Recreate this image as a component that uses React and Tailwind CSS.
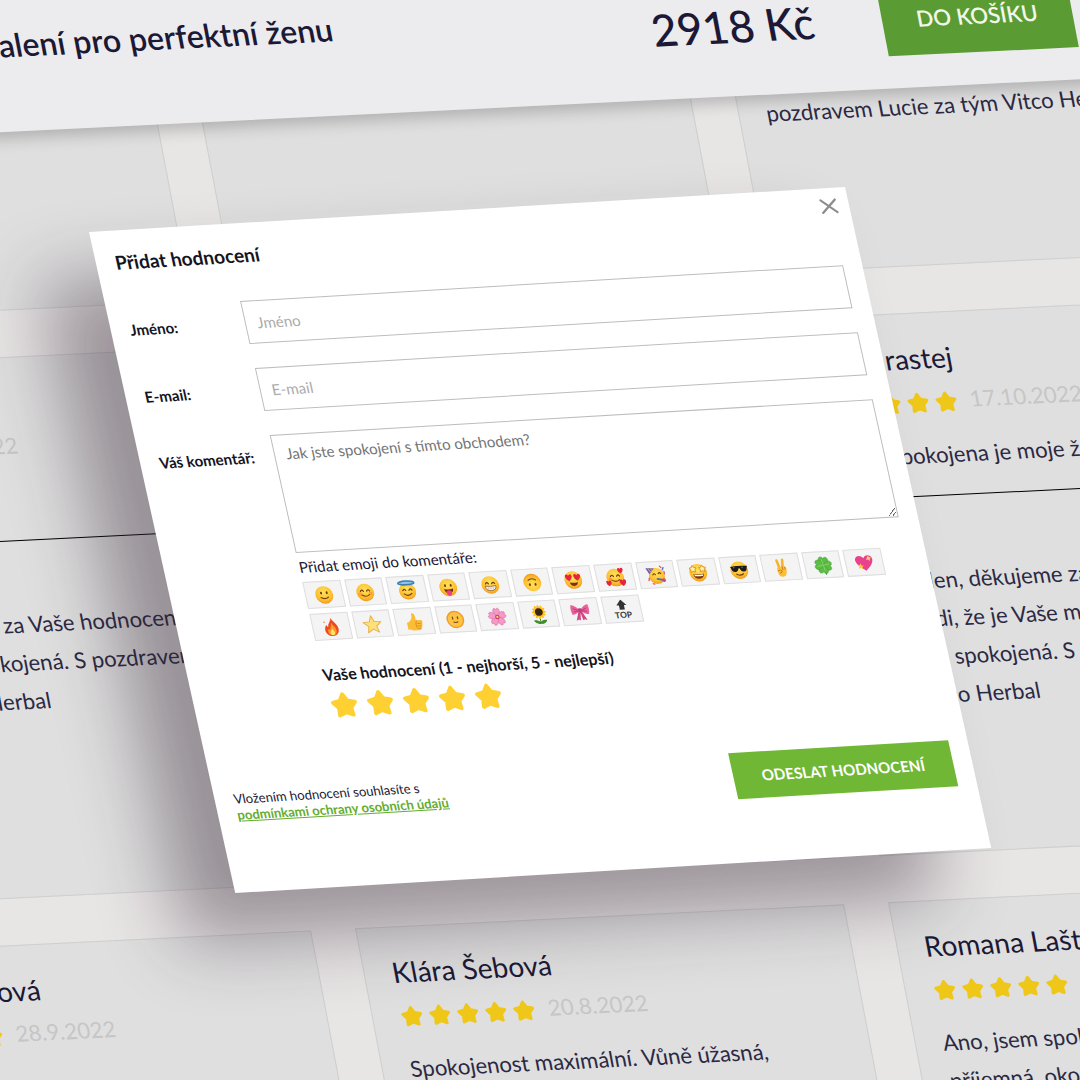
// App.jsx
import React, { useState } from 'react';

const STAR_PATH =
  'M12 3.2 15.06 8.29 20.84 9.63 16.95 14.11 17.47 20.02 12 17.7 6.53 20.02 7.05 14.11 3.16 9.63 8.94 8.29Z';

const Star = ({ className = '' }) => (
  <svg viewBox="0 0 24 24" className={className} aria-hidden="true">
    <path d={STAR_PATH} fill="currentColor" stroke="currentColor" strokeWidth="3" strokeLinejoin="round" />
  </svg>
);

// Shared yellow head, everything else is drawn on top of it
const Face = ({ children }) => (
  <>
    <circle cx="12" cy="12" r="10.5" fill="url(#face)" />
    {children}
  </>
);

const eyes = (
  <>
    <ellipse cx="8.6" cy="9.6" rx="1.2" ry="1.7" fill="#6b3a10" />
    <ellipse cx="15.4" cy="9.6" rx="1.2" ry="1.7" fill="#6b3a10" />
  </>
);

const happyEyes = (
  <path d="M6.5 10.5q1.8-3 3.6 0M13.9 10.5q1.8-3 3.6 0" fill="none" stroke="#6b3a10" strokeWidth="1.4" strokeLinecap="round" />
);

const smile = (
  <path d="M7.5 14.8q4.5 3.4 9 0" fill="none" stroke="#7a4512" strokeWidth="1.3" strokeLinecap="round" />
);

const HEART = 'M0 3.4C-5-.4-3.2-3.6-1.4-3.2-.5-3 0-2 0-2S.5-3 1.4-3.2C3.2-3.6 5-.4 0 3.4Z';

const EMOJIS = [
  { name: 'Úsměv', art: <Face>{eyes}{smile}</Face> },
  {
    name: 'Radost',
    art: (
      <Face>
        <circle cx="5.8" cy="13.6" r="2.2" fill="#f98a3c" opacity=".6" />
        <circle cx="18.2" cy="13.6" r="2.2" fill="#f98a3c" opacity=".6" />
        {happyEyes}
        {smile}
      </Face>
    ),
  },
  {
    name: 'Andílek',
    art: (
      <>
        <circle cx="12" cy="13.5" r="10" fill="url(#face)" />
        <ellipse cx="12" cy="3.6" rx="9.6" ry="2.2" fill="#8fc4e8" stroke="#3a7fb0" strokeWidth="1.8" />
        <path d="M6.5 12.5q1.8-3 3.6 0M13.9 12.5q1.8-3 3.6 0M7.4 16.4q4.6 4 9.2 0" fill="none" stroke="#6b3a10" strokeWidth="1.4" strokeLinecap="round" />
      </>
    ),
  },
  {
    name: 'Vyplazený jazyk',
    art: (
      <Face>
        {eyes}
        <path d="M6.5 13.4q5.5 2 11 0-.8 5.4-5.5 5.4t-5.5-5.4Z" fill="#6b2c10" />
        <path d="M9 16q3-1.2 6 0v2.6a3 3.4 0 0 1-6 0Z" fill="#f0407c" />
      </Face>
    ),
  },
  {
    name: 'Zubatý úsměv',
    art: (
      <Face>
        {happyEyes}
        <path d="M5.6 13q6.4 1.4 12.8 0 0 5.6-6.4 5.6T5.6 13Z" fill="#fff" stroke="#8a5a2a" strokeWidth=".9" />
        <path d="M6 15.6h12M9.2 13.8v4.2M12 14v4.5M14.8 13.8v4.2" stroke="#b9b0a8" strokeWidth=".6" />
      </Face>
    ),
  },
  { name: 'Vzhůru nohama', art: <g transform="rotate(180 12 12)"><Face>{eyes}{smile}</Face></g> },
  {
    name: 'Zamilovaný',
    art: (
      <Face>
        <path d={HEART} transform="translate(7 9) scale(1.25)" fill="#e8243c" />
        <path d={HEART} transform="translate(17 9) scale(1.25)" fill="#e8243c" />
        <path d="M7.2 14.6q4.8 1.4 9.6 0-.6 4.4-4.8 4.4t-4.8-4.4Z" fill="#7a3412" />
      </Face>
    ),
  },
  {
    name: 'Láska',
    art: (
      <Face>
        {happyEyes}
        {smile}
        <circle cx="5.8" cy="13.8" r="2" fill="#f9703c" opacity=".6" />
        <path d={HEART} transform="translate(19.5 4)" fill="#e8243c" />
        <path d={HEART} transform="translate(3.2 18.5)" fill="#e8243c" />
        <path d={HEART} transform="translate(20 18.5) scale(1.2)" fill="#e8243c" />
      </Face>
    ),
  },
  {
    name: 'Oslava',
    art: (
      <>
        <circle cx="12.5" cy="13" r="9.5" fill="url(#face)" />
        <path d="M.8 3.2 10.8 3.8 4 10.6Z" fill="#6d5bb0" />
        <path d="M3.5 3.6 6.2 8.2M7 3.8l1 2.6" stroke="#f6c12f" strokeWidth="1" />
        <path d="M8 11.5q1.5-2.6 3.2 0M14.5 10.5q1.5-2.6 3.2 0" fill="none" stroke="#6b3a10" strokeWidth="1.3" strokeLinecap="round" />
        <path d="M12.5 16.5l6 1.5" stroke="#3d6fc4" strokeWidth="2" strokeLinecap="round" />
        <circle cx="20" cy="18.5" r="2.2" fill="#c74a8a" />
        <path d="M18 1.5l1.5 2M22 8v3M3 15l-1 3M6 22l2 .5" stroke="#e2456a" strokeWidth="1.4" strokeLinecap="round" />
        <path d="M22 3.5l-1.5 2.5" stroke="#5a6fd0" strokeWidth="1.6" strokeLinecap="round" />
      </>
    ),
  },
  {
    name: 'Hvězdné oči',
    art: (
      <Face>
        <path d={STAR_PATH} transform="translate(.6 1.6) scale(.48)" fill="#fff0a8" stroke="#d98a1a" strokeWidth="2" />
        <path d={STAR_PATH} transform="translate(11.9 1.6) scale(.48)" fill="#fff0a8" stroke="#d98a1a" strokeWidth="2" />
        <path d="M5.6 13.4q6.4 1.6 12.8 0-.8 5.8-6.4 5.8t-6.4-5.8Z" fill="#7a3412" />
        <path d="M6.6 14.2q5.4 1.2 10.8 0l-.6 1.8q-4.8.8-9.6 0Z" fill="#fff" />
      </Face>
    ),
  },
  {
    name: 'Sluneční brýle',
    art: (
      <Face>
        <path d="M1.8 7.4q10.2-1.4 20.4 0l-.8 1.8q-.4 4.6-4.4 4.6-3.4 0-4.4-4h-1.2q-1 4-4.4 4-4 0-4.4-4.6Z" fill="#1b1b1f" />
        <path d="M5 8.8l2-.2M15 8.8l2-.2" stroke="#77808c" strokeWidth="1" />
        <path d="M8 16.6q4 2.8 8 0" fill="none" stroke="#6b3a10" strokeWidth="1.5" strokeLinecap="round" />
      </Face>
    ),
  },
  {
    name: 'Vítězství',
    art: (
      <>
        <path d="M9.8 13 8.2 3.2M13.4 12.5 15 2.8" stroke="#f6b32b" strokeWidth="3.2" strokeLinecap="round" />
        <path d="M6.8 13.5q0-3 3-2.6l5.4-.4q2.8 0 2.6 3.4l-.6 4q-.8 5-5.2 5t-4.8-4.5Z" fill="#fbbf35" />
        <path d="M7.4 15.5q3.6-1.8 4.8.4.4 2.2-2.8 2.4M13.4 11v3.4M16.2 11.5v2.5" fill="none" stroke="#c97a14" strokeWidth="1" strokeLinecap="round" />
      </>
    ),
  },
  {
    name: 'Čtyřlístek',
    art: (
      <>
        <path d="M12 12q2 5 1.5 10.5" fill="none" stroke="#2f7d2a" strokeWidth="1.8" strokeLinecap="round" />
        {[0, 90, 180, 270].map((r) => (
          <path key={r} d="M12 12C4.5 9.5 5.5 2.5 9.2 2.3 11 2.2 12 4 12 4s1-1.8 2.8-1.7C18.5 2.5 19.5 9.5 12 12Z" transform={`rotate(${r + 8} 12 12)`} fill="#5cbc45" stroke="#43a336" strokeWidth=".6" />
        ))}
        <path d="M12 12 11 5M12 12l7-1M12 12l1 6.5M12 12l-7 1" stroke="#93d66f" strokeWidth=".9" />
      </>
    ),
  },
  {
    name: 'Zářící srdce',
    art: (
      <>
        <path d="M12.5 21.5C3 15 1.2 10.5 1.8 7.5 2.6 3.2 9 1.5 12 6.5 14.5 1.5 21.5 2.5 22.3 7.2 22.9 11 20 16 12.5 21.5Z" fill="#e8418d" />
        <path d="M18 3.5l1 2.4 2.4.6-2 1.4-.4 2.4-1.8-1.8-2.4.4 1.2-2.200Z" fill="#ffd36b" />
        <path d="M7 12.4l1.1 2.6 2.600.4-1.900 1.600.2 2.600-2.200-1.600-2.400.8.8-2.400-1.500-2 2.400-.2Z" fill="#ffc247" />
      </>
    ),
  },
  {
    name: 'Oheň',
    art: (
      <>
        <path d="M13 1.2c1 4.3 6.5 7 7 13 .4 5-3.2 8.8-8 8.8s-8.6-3.4-8-8.4c.3-2.6 1.6-4.4 2.6-5.6.2 1.6.8 2.6 1.8 3C8.2 8 12.5 6 13 1.2Z" fill="#ee4a1f" />
        <path d="M12.6 6.8c.4 3.4 4.6 5 4.6 9.4 0 3.6-2 5.8-5 5.8s-5.4-2-5-5.2c.2-1.6 1-2.6 1.6-3.2.4 1 .8 1.4 1.6 1.6-.2-3 2-4.6 2.2-8.4Z" fill="#fb9a26" />
        <path d="M12.4 13.5c.3 2 2.4 2.8 2.4 5.2 0 2-1.1 3.3-2.6 3.3s-2.9-1.1-2.7-3c.2-2 2.5-2.7 2.9-5.5Z" fill="#ffe46b" />
        <circle cx="4.5" cy="6" r=".9" fill="#f0703a" />
      </>
    ),
  },
  {
    name: 'Hvězda',
    art: <path d="M12 1.5 14.9 8.7 22.7 9.2 16.7 14.2 18.6 21.7 12 17.6 5.4 21.7 7.3 14.2 1.3 9.2 9.1 8.7Z" fill="#ffe07a" stroke="#e5ae3f" strokeWidth="1.1" strokeLinejoin="round" />,
  },
  {
    name: 'Palec nahoru',
    art: (
      <>
        <path d="M3 12.5q4.6-1.2 6.5-5.5.6-1.6.4-4 .2-1.8 1.8-1.6 2.8.6 2.4 6.4l-.2 2.2h6q2 .2 1.8 2.2.1 1.3-1 1.7 1.2 1.7-.6 3.1.8 1.7-1 2.7.4 2.1-2 2.3H10q-3 0-4-1.2H3Z" fill="#fbbd35" />
        <path d="M15 14h4.5M15 17h4M14.5 19.8h3.5M14.5 10.5q-2 3-1 8" fill="none" stroke="#d18a18" strokeWidth=".9" strokeLinecap="round" />
      </>
    ),
  },
  {
    name: 'Slunce',
    art: (
      <>
        <circle cx="12" cy="12" r="10.5" fill="#f39a2d" />
        <circle cx="12" cy="12" r="8.8" fill="#fdc443" />
        <path d="M9 9v2.2M15 9v2.2" stroke="#7a4210" strokeWidth="1.5" strokeLinecap="round" />
        <path d="M9.500 14.8q2.5 1.6 5 0" fill="none" stroke="#8a5216" strokeWidth="1.2" strokeLinecap="round" />
      </>
    ),
  },
  {
    name: 'Květ třešně',
    art: (
      <>
        {[0, 72, 144, 216, 288].map((r) => (
          <path key={r} d="M12 12C6.8 8.5 7.5 1.8 10.3 1.5L12 3l1.7-1.5C16.5 1.8 17.2 8.5 12 12Z" transform={`rotate(${r} 12 12)`} fill="#f49ac6" stroke="#dc6ca5" strokeWidth=".7" />
        ))}
        <circle cx="12" cy="12" r="2.6" fill="#c9366f" />
        <circle cx="12" cy="12" r="1.4" fill="#ffd24a" />
      </>
    ),
  },
  {
    name: 'Slunečnice',
    art: (
      <>
        <path d="M12 15v8M12 22.5q-5 .5-7-3.3 5-.7 7 3.3ZM12 22.5q5 .5 7-3.3-5-.7-7 3.3Z" fill="#4a9a35" stroke="#3a8528" strokeWidth="1.2" />
        {[0, 30, 60, 90, 120, 150].map((r) => (
          <ellipse key={r} cx="12" cy="9" rx="2.2" ry="8.5" transform={`rotate(${r} 12 9)`} fill="#fcc01f" />
        ))}
        <circle cx="12" cy="9" r="4.6" fill="#3d2412" />
      </>
    ),
  },
  {
    name: 'Mašle',
    art: (
      <>
        <path d="M10 11 5.5 22l3-1.3 2 1.3L12 13l1.5 9 2-1.3 3 1.3L14 11Z" fill="#d14a85" />
        <path d="M11 9C8 5 3.5 2.5 1.8 3.3.8 6.5.8 11 2.2 15 5 15 9 13 11 11ZM13 9c3-4 7.5-6.5 9.2-5.7 1 3.2 1 7.7-.4 11.7C19 15 15 13 13 11Z" fill="#e8639b" />
        <path d="M4 7.5 10 10M4 11.5l6-1M20 7.5 14 10M20 11.5l-6-1" stroke="#b93a72" strokeWidth="1" />
        <rect x="9.8" y="7.4" width="4.4" height="5" rx="1.5" fill="#c43c79" />
      </>
    ),
  },
  {
    name: 'Nahoru',
    art: (
      <>
        <path d="M12 0 18 6.8H15V12H9V6.8H6Z" fill="#333" />
        <text x="12" y="22" textAnchor="middle" fontSize="10" fontWeight="700" fill="#333">TOP</text>
      </>
    ),
  },
];

const REVIEWS = [
  {
    name: 'Olga Malá',
    date: '18.10.2022',
    text: 'Super',
    reply: ['Dobrý den, děkujeme za Vaše hodnocení.', 'Jsme rádi, že jste spokojená. S pozdravem', 'Lucie za tým Vitco Herbal'],
  },
  { name: 'Eva Dvořáková', date: '18.10.2022', text: 'Spokojenost' },
  {
    name: 'Eli Chrastej',
    date: '17.10.2022',
    text: 'Velmi spokojena je moje žena',
    reply: ['Dobrý den, děkujeme za Vaše', 'Jsme rádi, že je Vaše maminka', 'opravdu spokojená. S pozdravem', 'tým Vitco Herbal'],
  },
  { name: 'Hanka Pavlová', date: '28.9.2022', text: 'Super' },
  {
    name: 'Klára Šebová',
    date: '20.8.2022',
    text: 'Spokojenost maximální. Vůně úžasná, doporučuji. Kupuji už podruhé i příště',
  },
  {
    name: 'Romana Laštovková',
    date: '18.8.2022',
    text: 'Ano, jsem spokojená. Vůně je opravdu příjemná, okouzlující',
  },
];

const cardClass = 'border border-[#cfcfcf] bg-[#dfdfdf]';
const bodyClass = 'text-[22px] leading-[38px] text-[#2b2944]';

const ReviewCard = ({ review }) => (
  <article className={`${cardClass} min-h-[537px] p-[27px]`}>
    <h3 className="text-[28px] leading-[34px] whitespace-nowrap">{review.name}</h3>
    <div className="mt-2 flex h-9 items-center">
      <div className="flex gap-1 pt-1 text-[#eec718]">
        {[1, 2, 3, 4, 5].map((n) => (
          <Star key={n} className="size-6" />
        ))}
      </div>
      <span className="ml-3 text-[22px] leading-9 text-[#c6c6c6]">{review.date}</span>
    </div>
    <p className={`${bodyClass} mt-[17px]`}>{review.text}</p>
    {review.reply && (
      <>
        <hr className="mt-[21px] mb-16 border-black" />
        <p className={`${bodyClass} whitespace-nowrap`}>
          {review.reply.map((line) => (
            <span key={line} className="block">{line}</span>
          ))}
        </p>
      </>
    )}
  </article>
);

const ProductBar = () => (
  <header className="relative z-10 -mr-10 -ml-40 flex h-[131px] items-start bg-[#ececef] pr-[60px] shadow-[0_6px_16px_rgba(0,0,0,0.22)]">
    <h1 className="w-[484px] pt-[25px] text-right text-[32px] leading-10 font-semibold whitespace-nowrap">
      balení pro perfektní ženu
    </h1>
    <p className="grow pt-[35px] pr-[68px] text-right text-[44px] leading-[52px] font-medium">2918 Kč</p>
    <button className="mt-6 h-[75px] w-[190px] bg-[#5a9c33] pt-[2px] text-[22px] leading-8 font-semibold text-[#f3f7e8]">
      DO KOŠÍKU
    </button>
  </header>
);

const labelClass = 'text-[15px] leading-5 font-bold whitespace-nowrap';
const fieldClass = 'w-full border border-[#bdbdbd] bg-white px-[11px] text-[15px] leading-5 outline-none';

const ReviewDialog = () => {
  const [comment, setComment] = useState('');
  const [rating, setRating] = useState(5);

  return (
    <form
      role="dialog"
      aria-labelledby="dialog-title"
      onSubmit={(e) => e.preventDefault()}
      className="relative ml-[89px] w-[70%] origin-top-left bg-white px-[19px] pt-5 pb-[63px] text-[#15151f] shadow-[-60px_46px_70px_rgba(50,35,50,0.42)] [transform:matrix(1,-0.0595,0.2212,1,0,0)]"
    >
      <button type="button" aria-label="Zavřít" className="absolute top-[9px] right-[11px] text-[#8d8d8d]">
        <svg viewBox="0 0 20 20" className="size-[18px]" fill="none" stroke="currentColor" strokeWidth="2.4" strokeLinecap="round">
          <path d="M2 3 18 17M18 3 2 17" />
        </svg>
      </button>
      <h2 id="dialog-title" className="text-[19px] leading-6 font-bold">Přidat hodnocení</h2>

      <div className="mt-[33px] grid grid-cols-[115px_1fr] gap-y-6">
        <label htmlFor="name" className={`${labelClass} self-center`}>Jméno:</label>
        <input id="name" type="text" placeholder="Jméno" className={`${fieldClass} h-[43px] placeholder:text-[#ababab]`} />

        <label htmlFor="email" className={`${labelClass} self-center`}>E-mail:</label>
        <input id="email" type="email" placeholder="E-mail" className={`${fieldClass} h-[43px] placeholder:text-[#ababab]`} />

        <label htmlFor="comment" className={`${labelClass} pt-[11px]`}>Váš komentář:</label>
        <div>
          <textarea
            id="comment"
            value={comment}
            onChange={(e) => setComment(e.target.value)}
            placeholder="Jak jste spokojení s tímto obchodem?"
            className={`${fieldClass} block h-[118px] resize pt-2 placeholder:text-[#757575]`}
          />
          <p className="mt-1 text-[15px] leading-5 text-[#1c1936]">Přidat emoji do komentáře:</p>
          <div className="mt-[5px] mr-[25px] grid grid-cols-[repeat(14,1fr)] gap-x-1 gap-y-[5px]">
            {EMOJIS.map(({ name, art }) => (
              <button
                key={name}
                type="button"
                title={name}
                onClick={() => setComment(`${comment} ${name}`)}
                className="flex h-[27px] items-center justify-center border border-[#dedede] bg-[#f4f4f4]"
              >
                <svg viewBox="0 0 24 24" className="size-5">{art}</svg>
              </button>
            ))}
          </div>

          <fieldset className="mt-6">
            <legend className="text-[16px] leading-5 font-bold">Vaše hodnocení (1 - nejhorší, 5 - nejlepší)</legend>
            <div className="mt-[6px] flex gap-[6px] text-[#ffd032]">
              {[1, 2, 3, 4, 5].map((n) => (
                <label key={n} className={n <= rating ? 'cursor-pointer' : 'cursor-pointer text-gray-300'}>
                  <input type="radio" name="rating" value={n} aria-label={`${n}`} checked={rating === n} onChange={() => setRating(n)} className="sr-only" />
                  <Star className="size-[30px]" />
                </label>
              ))}
            </div>
          </fieldset>
        </div>
      </div>

      <div className="mt-[55px] flex items-start justify-between">
        <p className="pt-2 text-[13px] leading-4 text-[#1c1936]">
          Vložením hodnocení souhlasíte s
          <br />
          <a href="#podminky" className="font-bold text-[#64ad2f] underline">podmínkami ochrany osobních údajů</a>
        </p>
        <button type="submit" className="h-[46px] w-[220px] bg-[#70b735] text-[15px] leading-6 font-bold text-white">
          ODESLAT HODNOCENÍ
        </button>
      </div>
    </form>
  );
};

const App = () => (
  <div className="relative h-screen overflow-hidden bg-[#e8e5e5] font-['Lato','Noto_Sans',sans-serif] text-[#1c1936]">
    <svg className="absolute size-0" aria-hidden="true">
      <defs>
        <radialGradient id="face" cx=".5" cy=".35" r=".7">
          <stop offset="0" stopColor="#ffe25a" />
          <stop offset=".65" stopColor="#fdbf2f" />
          <stop offset="1" stopColor="#ee8f1c" />
        </radialGradient>
      </defs>
    </svg>

    <div className="origin-top-left [transform:matrix(1,-0.049,0.19,1,0,0)]">
      <ProductBar />
      <main className="-mr-[118px] -ml-[355px] grid grid-cols-3 gap-x-11 gap-y-[46px]">
        {/* tails of the reviews that scroll away under the product bar */}
        <article className={`${cardClass} min-h-[177px] border-t-0`} />
        <article className={`${cardClass} border-t-0`} />
        <article className={`${cardClass} border-t-0 px-[27px]`}>
          <p className={`${bodyClass} whitespace-nowrap`}>pozdravem Lucie za tým Vitco Herbal</p>
        </article>
        {REVIEWS.map((review) => (
          <ReviewCard key={review.name} review={review} />
        ))}
      </main>
    </div>

    <div className="absolute inset-0 z-20 pt-[232px]">
      <ReviewDialog />
    </div>
  </div>
);

export default App;
